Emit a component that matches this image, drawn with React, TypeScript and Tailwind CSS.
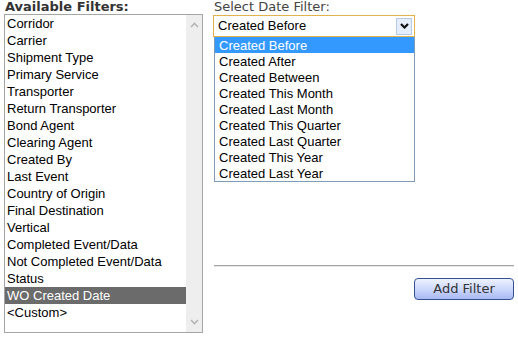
import React from 'react';

const filters = [
  'Corridor',
  'Carrier',
  'Shipment Type',
  'Primary Service',
  'Transporter',
  'Return Transporter',
  'Bond Agent',
  'Clearing Agent',
  'Created By',
  'Last Event',
  'Country of Origin',
  'Final Destination',
  'Vertical',
  'Completed Event/Data',
  'Not Completed Event/Data',
  'Status',
  'WO Created Date',
  '<Custom>',
];

const dateOptions = [
  'Created Before',
  'Created After',
  'Created Between',
  'Created This Month',
  'Created Last Month',
  'Created This Quarter',
  'Created Last Quarter',
  'Created This Year',
  'Created Last Year',
];

const Chevron = ({ up, color, bold }: { up?: boolean; color: string; bold?: boolean }) => (
  <svg width="9" height="6" viewBox="0 0 9 6" className={up ? 'rotate-180' : ''}>
    <path d="M1 1 L4.5 4.5 L8 1" fill="none" stroke={color} strokeWidth={bold ? 2.2 : 1.6} />
  </svg>
);

const App: React.FC = () => {
  const selected = 'WO Created Date';
  const dateSelected = 'Created Before';

  return (
    <div className="w-[518px] h-[343px] bg-white flex font-['Liberation_Sans',Arial,sans-serif] overflow-hidden">
      {/* available filters */}
      <div className="pl-[4px] w-[209px] shrink-0">
        <div className="font-['DejaVu_Sans',Verdana,sans-serif] font-bold text-[13px] leading-[14px] text-[#333333] pl-[1px]">
          Available Filters:
        </div>
        <div className="w-[199px] h-[319px] border border-[#a5a5a5] flex">
          <div className="flex-1">
            {filters.map(f => (
              <div
                key={f}
                className={`h-[17px] leading-[17px] text-[13px] pl-[2px] whitespace-nowrap ${
                  f === selected ? 'bg-[#6b6b6b] text-white' : 'text-black'
                }`}
              >
                {f}
              </div>
            ))}
          </div>
          <div className="w-[16px] bg-[#eeeeee] flex flex-col justify-between items-center py-[7px]">
            <Chevron up color="#b5b5b5" />
            <Chevron color="#b5b5b5" />
          </div>
        </div>
      </div>

      {/* date filter */}
      <div className="w-[301px] ml-[4px] flex flex-col">
        <div className="font-['DejaVu_Sans',Verdana,sans-serif] text-[13px] leading-[14px] text-[#444444] pl-[1px] mb-[1px]">
          Select Date Filter:
        </div>
        <div className="w-[202px] h-[22px] border border-[#e2b24f] bg-white flex items-center">
          <span className="flex-1 text-[13px] text-black pl-[4px] leading-[20px]">{dateSelected}</span>
          <div className="w-[16px] h-[17px] mr-[2px] bg-[#e4eefc] border border-[#b8cbe6] flex items-center justify-center">
            <Chevron color="#111111" bold />
          </div>
        </div>
        <div className="ml-[1px] w-[201px] border border-[#7f9db9] border-t-0">
          {dateOptions.map(o => (
            <div
              key={o}
              className={`h-[16px] leading-[17px] text-[13px] pl-[4px] whitespace-nowrap ${
                o === dateSelected ? 'bg-[#3399ff] text-white' : 'text-black'
              }`}
            >
              {o}
            </div>
          ))}
        </div>
        <div className="mt-[83px] ml-[1px] h-[2px] bg-[#a3a3a3] border-b border-[#e8e8e8]" />
        <div className="flex justify-end mt-[11px]">
          <button className="w-[100px] h-[22px] rounded-[4px] border border-[#33528f] bg-gradient-to-b from-[#eef2ff] via-[#cdd8fb] to-[#a9b9f1] font-['DejaVu_Sans',Verdana,sans-serif] text-[13px] text-[#333333] leading-[20px]">
            Add Filter
          </button>
        </div>
      </div>
    </div>
  );
};

export default App;
